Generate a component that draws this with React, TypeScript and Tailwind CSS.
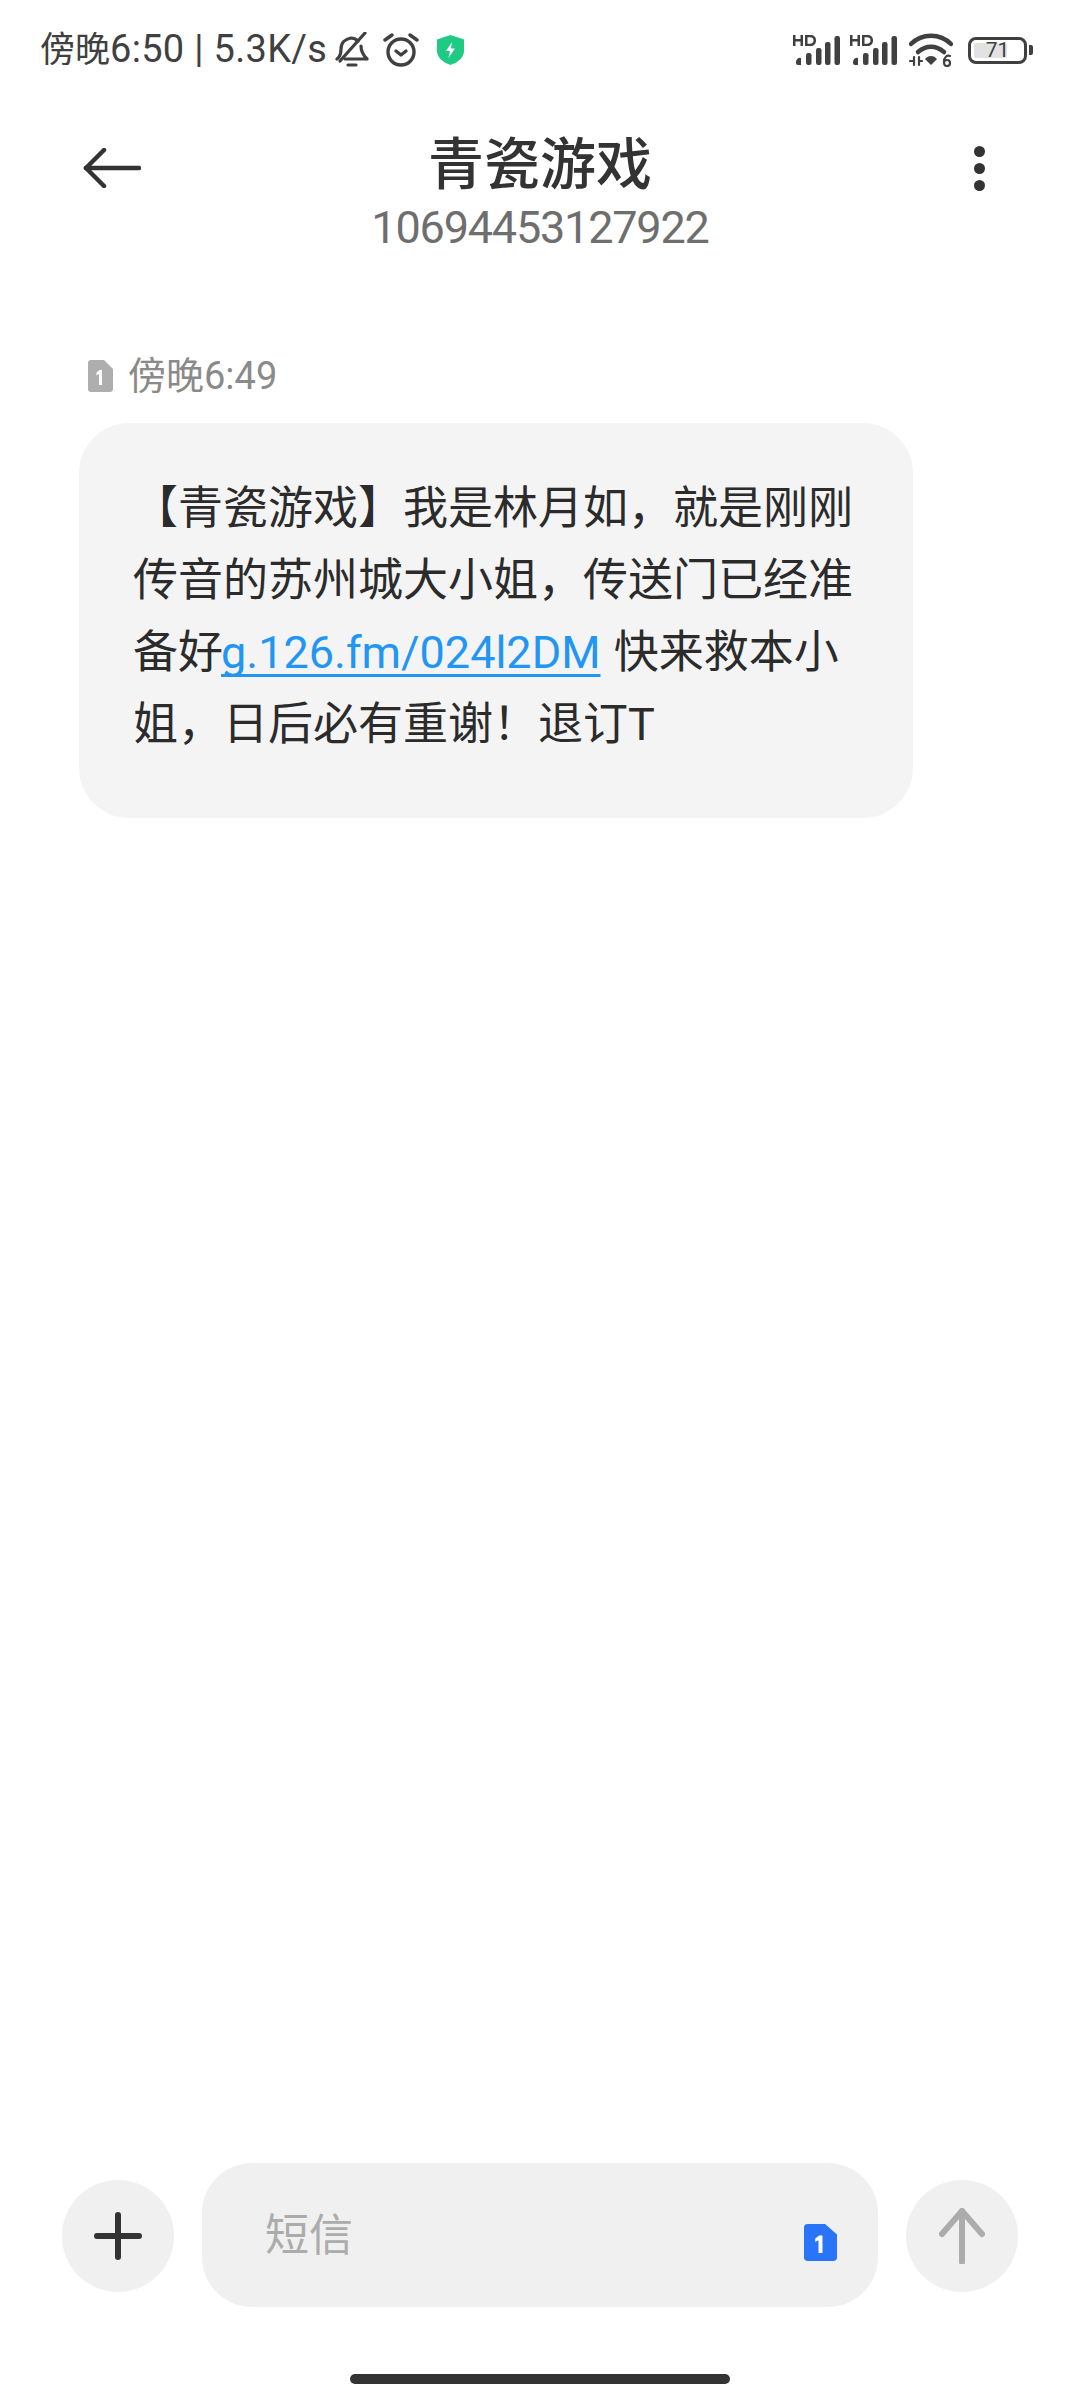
import React from 'react';

const SimIcon: React.FC<{ className: string; fill: string; digit: string }> = ({ className, fill, digit }) => (
  <svg viewBox="0 0 25 32" preserveAspectRatio="none" className={className}>
    <path d="M3 0H16L25 9V29a3 3 0 0 1-3 3H3a3 3 0 0 1-3-3V3a3 3 0 0 1 3-3Z" fill={fill} />
    <path d="M14 10V25H11V14L8.5 15.5V12.5L11.5 10Z" fill={digit} />
  </svg>
);

const Signal: React.FC = () => (
  <svg viewBox="0 0 47 30" className="w-[47px] h-[30px]" fill="#404040">
    <path d="M0 0h2.5v4h5V0H10v11H7.5V6.5h-5V11H0ZM12 0h5c4 0 6 2 6 5.500S21 11 17 11h-5Zm2.500 2.300v6.400H17c2.300 0 3.500-1.200 3.500-3.200S19.300 2.300 17 2.300Z" />
    <path d="M3 27a4 4 0 0 1 5-4v7H5a2 2 0 0 1-2-2Z" />
    <rect x="13" y="18" width="5.5" height="12" rx="2.2" />
    <rect x="23" y="13" width="5.5" height="17" rx="2.2" />
    <rect x="32" y="7" width="5.5" height="23" rx="2.2" />
    <rect x="41.500" y="1" width="5.5" height="29" rx="2.2" />
  </svg>
);

const StatusBar: React.FC = () => (
  <div className="h-[100px] flex items-center pl-[40px] pr-[47px] text-[#404040]">
    <span className="text-[35px] leading-[40px] whitespace-nowrap">
      傍晚<span className="text-[38px] tracking-[0.3px]">6:50 | 5.3K/s</span>
    </span>
    <svg viewBox="0 0 34 36" className="w-[34px] h-[36px] ml-[8px]" fill="none" stroke="#404040" strokeWidth="3.2" strokeLinecap="round" strokeLinejoin="round">
      <path d="M2 27c3-2 4-5 4-10 0-6 4-10 10-11 3 0 5 1 7 3" />
      <path d="M26 14c0 5 2 9 6 13H10" />
      <path d="M30 1 5 29" />
      <path d="M13 33h8" />
    </svg>
    <svg viewBox="0 0 36 36" className="w-[36px] h-[36px] ml-[14px]" fill="none" stroke="#404040" strokeWidth="3.4" strokeLinecap="round" strokeLinejoin="round">
      <circle cx="18" cy="20" r="13" />
      <path d="m13 19 5 4 5-4" />
      <path d="M2 8 9 3" />
      <path d="M34 8 27 3" />
    </svg>
    <svg viewBox="0 0 27 30" className="w-[27px] h-[30px] ml-[18px]">
      <path d="M13.5 0 27 4.5V16c0 6-5 11-13.5 14C5 27 0 22 0 16V4.5Z" fill="#1fca85" />
      <path d="M15 7 9 16h4l-1.5 7L18 13.5h-4Z" fill="#fff" />
    </svg>
    <div className="ml-auto flex items-center">
      <Signal />
      <div className="ml-[10px]"><Signal /></div>
      <svg viewBox="0 0 44 34" className="w-[44px] h-[34px] ml-[12px]" fill="none" stroke="#404040" strokeLinecap="round">
        <path d="M2 11C13 0 31 0 42 11" strokeWidth="4.5" />
        <path d="M9 19c8-7 18-7 26 0" strokeWidth="4.5" />
        <path d="M17 26c3-3 7-3 10 0l-5 5Z" fill="#404040" strokeWidth="1.500" />
        <path d="M1 28h4M5 24v8M10 24v8M10 28h3" strokeWidth="2.200" />
        <path d="M41 23c-3-1-6 1-6 6 0 3 1 4 3 4s3-1 3-3-1-3-3-3-3 1-3 3" strokeWidth="2.200" />
      </svg>
      <div className="ml-[15px] relative w-[59px] h-[27px] rounded-[8px] border-[3px] border-[#404040] p-[3px]">
        <div className="h-full w-[71%] bg-[#e2e2e2] rounded-[2px]" />
        <span className="absolute inset-0 flex items-center justify-center text-[21px] leading-none text-[#404040]">71</span>
      </div>
      <div className="ml-[2px] w-[4px] h-[10px] rounded-r-[2px] bg-[#404040]" />
    </div>
  </div>
);

const Header: React.FC = () => (
  <div className="grid grid-cols-[1fr_auto_1fr] px-[83px] pt-[29px]">
    <div className="pt-[19px]">
      <svg viewBox="0 0 58 40" className="w-[58px] h-[40px]" fill="none" stroke="#333" strokeWidth="4.5" strokeLinecap="round" strokeLinejoin="round">
        <path d="M21 2 3 20l18 18" />
        <path d="M3 20h53" />
      </svg>
    </div>
    <div className="flex flex-col items-center pt-[2px]">
      <div className="text-[56px] leading-[68px] font-medium text-[#333]">青瓷游戏</div>
      <div className="mt-[2px] text-[45px] leading-[54px] tracking-[-1.2px] text-[#6e6e6e]">10694453127922</div>
    </div>
    <div className="flex flex-col items-end gap-[6px] pt-[17px] pr-[12px]">
      <span className="w-[11px] h-[11px] rounded-full bg-[#333]" />
      <span className="w-[11px] h-[11px] rounded-full bg-[#333]" />
      <span className="w-[11px] h-[11px] rounded-full bg-[#333]" />
    </div>
  </div>
);

const Message: React.FC = () => (
  <div className="flex-1 pt-[97px] pl-[79px]">
    <div className="flex items-center gap-[15px] pl-[9px] text-[38px] leading-[48px] text-[#8a8a8a]">
      <SimIcon className="w-[25px] h-[32px]" fill="#aeaeae" digit="#ffffff" />
      <span>傍晚6:49</span>
    </div>
    <div className="mt-[23px] w-[834px] rounded-[50px] bg-[#f4f4f5] pl-[54px] pr-[40px] pt-[50px] pb-[57px] text-[45px] leading-[72px] text-[#2b2b2b]">
      【青瓷游戏】我是林月如，就是刚刚<br />
      传音的苏州城大小姐，传送门已经准<br />
      备好<span className="-ml-[2px] mr-[2px] text-[#2196f3] underline decoration-[3px] underline-offset-[6px] [text-decoration-skip-ink:none]">g.126.fm/024l2DM</span> 快来救本小<br />
      姐，日后必有重谢！退订T
    </div>
  </div>
);

const Composer: React.FC = () => (
  <div className="flex items-center gap-[28px] px-[62px]">
    <button className="mt-[2px] w-[112px] h-[112px] rounded-full bg-[#f0f0f0] flex items-center justify-center">
      <svg viewBox="0 0 48 48" className="w-[48px] h-[48px]" fill="none" stroke="#333" strokeWidth="6" strokeLinecap="round">
        <path d="M24 3v42M3 24h42" />
      </svg>
    </button>
    <div className="flex-1 h-[144px] rounded-[50px] bg-[#f0f0f0] flex items-center pl-[63px] pr-[41px]">
      <span className="flex-1 pt-[2px] text-[44px] leading-[56px] text-[#acacac]">短信</span>
      <SimIcon className="w-[33px] h-[37px] mt-[15px]" fill="#2a74f9" digit="#ffffff" />
    </div>
    <button className="mt-[2px] w-[112px] h-[112px] rounded-full bg-[#f0f0f0] flex items-center justify-center">
      <svg viewBox="0 0 46 56" className="w-[46px] h-[56px]" fill="none" stroke="#acacac" strokeWidth="6" strokeLinecap="round" strokeLinejoin="round">
        <path d="M3 26 23 3l20 23" />
        <path d="M23 3v51" />
      </svg>
    </button>
  </div>
);

export default function App() {
  return (
    <div className="w-[1080px] h-[2400px] bg-white flex flex-col font-['Roboto','Noto_Sans_CJK_SC',sans-serif]">
      <StatusBar />
      <Header />
      <Message />
      <Composer />
      <div className="mt-[67px] mb-[16px] mx-auto w-[380px] h-[10px] rounded-full bg-[#333]" />
    </div>
  );
}
